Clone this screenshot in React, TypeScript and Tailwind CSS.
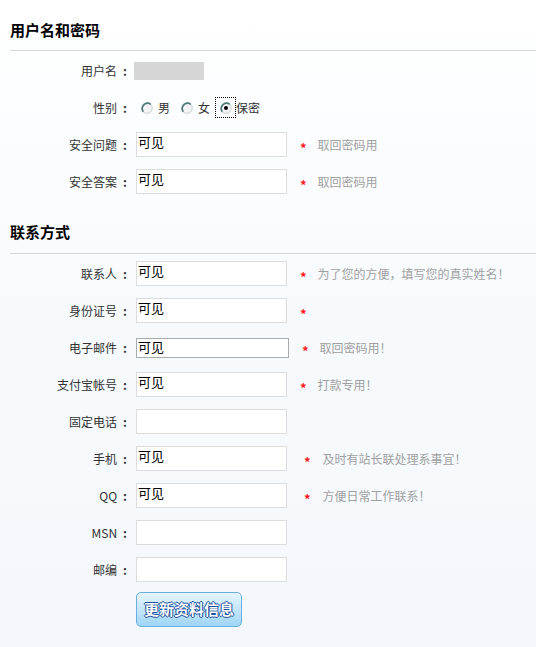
const font = { fontFamily: '"Noto Sans CJK SC", "Noto Sans", sans-serif' }

type Field = {
  label: string
  value?: string
  star?: boolean
  hint?: string
  starGap?: string
  hintGap?: string
  focused?: boolean
}

const account: Field[] = [
  { label: '安全问题', value: '可见', star: true, hint: '取回密码用' },
  { label: '安全答案', value: '可见', star: true, hint: '取回密码用' }
]

const contact: Field[] = [
  { label: '联系人', value: '可见', star: true, hint: '为了您的方便，填写您的真实姓名！' },
  { label: '身份证号', value: '可见', star: true },
  { label: '电子邮件', value: '可见', star: true, hint: '取回密码用！', focused: true },
  { label: '支付宝帐号', value: '可见', star: true, hint: '打款专用！' },
  { label: '固定电话' },
  { label: '手机', value: '可见', star: true, hint: '及时有站长联处理系事宜！', starGap: 'ml-[17px]', hintGap: 'ml-[12px]' },
  { label: 'QQ', value: '可见', star: true, hint: '方便日常工作联系！', starGap: 'ml-[17px]', hintGap: 'ml-[12px]' },
  { label: 'MSN' },
  { label: '邮编' }
]

function Radio({ checked }: { checked?: boolean }) {
  return (
    <svg width="12" height="12" viewBox="0 0 12 12" className="shrink-0">
      <circle cx="6" cy="6" r="5.3" fill="#f4f4f4" stroke="#d4dada" strokeWidth="1.2" />
      <path d="M2.3 9.7 A5.3 5.3 0 0 1 9.7 2.3" fill="none" stroke="#4f7878" strokeWidth="1.6" />
      {checked && <circle cx="6" cy="6" r="2" fill="#000" />}
    </svg>
  )
}

function Label({ text }: { text: string }) {
  return (
    <div className="flex w-[130px] shrink-0 items-center justify-end text-[12px] text-[#333]">
      <span>{text}</span>
      <span className="ml-[6px] mr-[3px] font-bold">:</span>
    </div>
  )
}

function Row({ f }: { f: Field }) {
  return (
    <div className="flex h-[37px] items-center">
      <Label text={f.label} />
      {f.focused ? (
        <div className="ml-[6px] mt-[1px] h-[20px] w-[153px] border border-[#a5acb2] bg-white pl-[1px] text-[13px] leading-[16px] text-black">
          {f.value}
        </div>
      ) : (
        <div className="ml-[6px] h-[25px] w-[151px] border border-[#dcdcdc] bg-white pl-[1px] pt-[1px] text-[13px] leading-[16px] text-black">
          {f.value}
        </div>
      )}
      {f.star && (
        <span className={`${f.starGap ?? (f.focused ? 'ml-[13px]' : 'ml-[13px]')} mt-[5px] text-[13px] font-bold leading-none text-[#ff1a1a]`}>*</span>
      )}
      {f.hint && (
        <span className={`${f.hintGap ?? 'ml-[11px]'} text-[12px] text-[#a0a0a0]`}>{f.hint}</span>
      )}
    </div>
  )
}

function Heading({ text, top }: { text: string; top: string }) {
  return (
    <div className={`ml-[10px] border-b border-[#d6d6d6] ${top}`}>
      <h2 className="h-[20px] text-[15px] font-bold leading-[20px] text-black">{text}</h2>
    </div>
  )
}

export default function App() {
  return (
    <div className="min-h-[647px] w-[536px] bg-gradient-to-b from-white via-[#f7fafd] to-[#f4f8fc]" style={font}>
      <Heading text="用户名和密码" top="pt-[20px] pb-[10px]" />
      <div className="pt-[1px]">
        <div className="flex h-[37px] items-center">
          <Label text="用户名" />
          <div className="ml-[4px] h-[18px] w-[70px] bg-[#d6d6d6]" />
        </div>
        <div className="flex h-[37px] items-center text-[12px] text-[#333]">
          <Label text="性别" />
          <div className="ml-[11px]"><Radio /></div>
          <span className="ml-[5px]">男</span>
          <div className="ml-[11px]"><Radio /></div>
          <span className="ml-[5px]">女</span>
          <div className="ml-[5px] flex h-[21px] w-[21px] items-center justify-center border border-dotted border-black">
            <Radio checked />
          </div>
          <span>保密</span>
        </div>
        {account.map(f => (
          <Row key={f.label} f={f} />
        ))}
      </div>
      <Heading text="联系方式" top="pt-[22px] pb-[11px]" />
      <div className="pt-[1px]">
        {contact.map(f => (
          <Row key={f.label} f={f} />
        ))}
        <div className="flex pt-[4px]">
          <div className="w-[136px] shrink-0" />
          <button className="h-[35px] w-[106px] rounded-[5px] border border-[#6aaee0] bg-gradient-to-b from-[#e6f5fd] via-[#c3e6fa] to-[#9fd5f6] text-[15px] font-bold text-white [text-shadow:1px_0_0_#1c4f9c,-1px_0_0_#1c4f9c,0_1px_0_#1c4f9c,0_-1px_0_#1c4f9c]">
            更新资料信息
          </button>
        </div>
      </div>
    </div>
  )
}
